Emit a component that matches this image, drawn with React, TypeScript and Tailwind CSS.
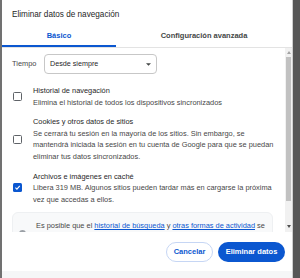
import React from "react";

const font = { fontFamily: '"Liberation Sans", Arial, sans-serif' };

function Box({ checked }: { checked?: boolean }) {
  if (checked) {
    return (
      <div className="w-[9px] h-[9px] rounded-[1.5px] bg-[#0b57d0] flex items-center justify-center">
        <svg width="7" height="7" viewBox="0 0 10 10">
          <path d="M2 5.2 L4.2 7.3 L8.2 2.8" stroke="white" strokeWidth="1.6" fill="none" />
        </svg>
      </div>
    );
  }
  return <div className="w-[9px] h-[9px] rounded-[1.5px] border border-[#5f6368]" />;
}

function Item({ title, lines, checked }: { title: string; lines: string[]; checked?: boolean }) {
  return (
    <div className="flex items-center">
      <div className="w-[21px] flex pl-[1px]">
        <Box checked={checked} />
      </div>
      <div className="flex flex-col text-[7.4px] leading-[11.6px]">
        <div className="text-[#1f1f1f]">{title}</div>
        {lines.map((l, i) => (
          <div key={i} className="text-[#474747] whitespace-nowrap">
            {l}
          </div>
        ))}
      </div>
    </div>
  );
}

export default function App() {
  return (
    <div className="w-[300px] h-[278px] flex overflow-hidden bg-[#585858]" style={font}>
      <div className="w-[2px] bg-[#717171]" />
      <div className="w-[290px] flex flex-col bg-white">
        <div className="h-[26px] pl-[10px] pt-[10px] text-[8.2px] leading-[10px] text-[#1f1f1f]">
          Eliminar datos de navegación
        </div>
        <div className="h-[21px] flex">
          <div className="w-[114px] flex flex-col">
            <div className="flex-1 flex items-center justify-center text-[7.5px] font-semibold text-[#0b57d0]">
              Básico
            </div>
            <div className="h-[2px] bg-[#0b57d0]" />
          </div>
          <div className="flex-1 flex items-center justify-center pb-[2px] text-[7.5px] font-semibold text-[#444746]">
            Configuración avanzada
          </div>
        </div>
        <div className="h-[1px] bg-[#e3e3e3]" />
        <div className="h-[184px] flex">
          <div className="flex-1 overflow-hidden pl-[10px] pt-[6px]">
            <div className="flex items-center h-[20px]">
              <div className="w-[32px] text-[7.4px] text-[#474747]">Tiempo</div>
              <div className="w-[113px] h-[20px] rounded-[4px] border border-[#c7c7c7] flex items-center justify-between pl-[5px] pr-[5px]">
                <span className="text-[7.2px] text-[#1f1f1f]">Desde siempre</span>
                <svg width="5" height="3" viewBox="0 0 6 3">
                  <path d="M0 0 L6 0 L3 3 Z" fill="#444746" />
                </svg>
              </div>
            </div>
            <div className="mt-[11px] flex flex-col gap-[8px]">
              <Item
                title="Historial de navegación"
                lines={["Elimina el historial de todos los dispositivos sincronizados"]}
              />
              <Item
                title="Cookies y otros datos de sitios"
                lines={[
                  "Se cerrará tu sesión en la mayoría de los sitios. Sin embargo, se",
                  "mantendrá iniciada la sesión en tu cuenta de Google para que se puedan",
                  "eliminar tus datos sincronizados.",
                ]}
              />
              <Item
                checked
                title="Archivos e imágenes en caché"
                lines={[
                  "Libera 319 MB. Algunos sitios pueden tardar más en cargarse la próxima",
                  "vez que accedas a ellos.",
                ]}
              />
            </div>
            <div className="mt-[7px] w-[261px] h-[40px] rounded-[6px] bg-[#f8f9fa] border border-[#eef0f2] flex pt-[7px] pl-[6px]">
              <div className="w-[17px] pt-[10px]">
                <div className="w-[7px] h-[7px] rounded-full bg-[#9aa0a6]" />
              </div>
              <div className="text-[7.4px] leading-[11.6px] text-[#474747] whitespace-nowrap">
                Es posible que el{" "}
                <span className="text-[#0b57d0] underline">historial de búsqueda</span> y{" "}
                <span className="text-[#0b57d0] underline">otras formas de actividad</span> se
              </div>
            </div>
          </div>
          <div className="w-[7px] bg-[#f1f1f1] flex flex-col items-center">
            <div className="h-[9px] flex items-center justify-center">
              <svg width="4" height="3" viewBox="0 0 4 3">
                <path d="M0 3 L4 3 L2 0 Z" fill="#a3a3a3" />
              </svg>
            </div>
            <div className="w-[5px] h-[144px] bg-[#c1c1c1]" />
            <div className="flex-1" />
            <div className="h-[11px] flex items-center justify-center">
              <svg width="4" height="3" viewBox="0 0 4 3">
                <path d="M0 0 L4 0 L2 3 Z" fill="#505050" />
              </svg>
            </div>
          </div>
        </div>
        <div className="h-[39px] flex justify-end items-start pt-[10px] pr-[7px] gap-[5px]">
          <div className="w-[47px] h-[20px] rounded-full border border-[#c6d6f4] flex items-center justify-center text-[7.5px] font-semibold text-[#0b57d0]">
            Cancelar
          </div>
          <div className="w-[67px] h-[20px] rounded-full bg-[#0b57d0] flex items-center justify-center text-[7.5px] font-semibold text-white">
            Eliminar datos
          </div>
        </div>
        <div className="flex-1 bg-[#f5f6f7]" />
      </div>
      <div className="w-[1px] bg-[#cfcfcf]" />
      <div className="flex-1 bg-[#575757]" />
    </div>
  );
}
